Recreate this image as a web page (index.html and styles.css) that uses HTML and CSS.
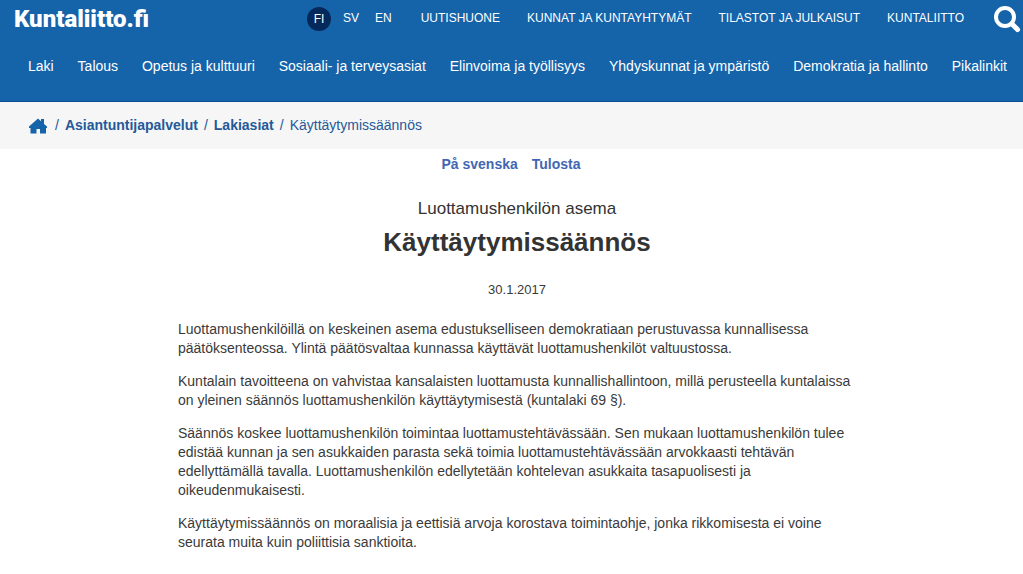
FILE: index.html
```html
<!DOCTYPE html>
<html lang="fi">
<head>
<meta charset="utf-8">
<meta name="viewport" content="width=device-width, initial-scale=1">
<title>Käyttäytymissäännös | Kuntaliitto.fi</title>
<link rel="stylesheet" href="styles.css">
</head>
<body>
<header class="header">
  <div class="topbar">
    <a class="logo" href="#">Kuntaliitto.fi</a>
    <nav class="languages" aria-label="Kieli">
      <a class="language language-active" href="#">FI</a>
      <a class="language" href="#">SV</a>
      <a class="language" href="#">EN</a>
    </nav>
    <nav class="services" aria-label="Palvelut">
      <a href="#">UUTISHUONE</a>
      <a href="#">KUNNAT JA KUNTAYHTYMÄT</a>
      <a href="#">TILASTOT JA JULKAISUT</a>
      <a href="#">KUNTALIITTO</a>
    </nav>
    <button class="search" type="button" aria-label="Haku">
      <svg viewBox="0 0 28 28" width="28" height="28" aria-hidden="true"><circle cx="12" cy="12" r="9" fill="none" stroke="#fff" stroke-width="4"/><path d="M19 19l5.500 5.500" stroke="#fff" stroke-width="5" stroke-linecap="round"/></svg>
    </button>
  </div>
  <nav class="mainnav" aria-label="Päävalikko">
    <a href="#">Laki</a>
    <a href="#">Talous</a>
    <a href="#">Opetus ja kulttuuri</a>
    <a href="#">Sosiaali- ja terveysasiat</a>
    <a href="#">Elinvoima ja työllisyys</a>
    <a href="#">Yhdyskunnat ja ympäristö</a>
    <a href="#">Demokratia ja hallinto</a>
    <a href="#">Pikalinkit</a>
  </nav>
</header>
<nav class="breadcrumb" aria-label="Murupolku">
  <a class="home" href="#" aria-label="Etusivu"><svg viewBox="0 0 18 16" width="18" height="16" aria-hidden="true"><path d="M9 .5l3 2.700V1h3v5L18 8.500V10h-1v5.500h-6V11H7.500v4.500H1.500V10H0V8.500z" fill="#1563a9"/></svg></a>
  <span>/</span>
  <a class="crumb" href="#">Asiantuntijapalvelut</a>
  <span>/</span>
  <a class="crumb" href="#">Lakiasiat</a>
  <span>/</span>
  <span>Käyttäytymissäännös</span>
</nav>
<main class="article">
  <div class="actions">
    <a href="#">På svenska</a>
    <a href="#">Tulosta</a>
  </div>
  <p class="topic">Luottamushenkilön asema</p>
  <h1 class="title">Käyttäytymissäännös</h1>
  <time class="date" datetime="2017-01-30">30.1.2017</time>
  <div class="body">
    <p>Luottamushenkilöillä on keskeinen asema edustukselliseen demokratiaan perustuvassa kunnallisessa päätöksenteossa. Ylintä päätösvaltaa kunnassa käyttävät luottamushenkilöt valtuustossa.</p>
    <p>Kuntalain tavoitteena on vahvistaa kansalaisten luottamusta kunnallishallintoon, millä perusteella kuntalaissa on yleinen säännös luottamushenkilön käyttäytymisestä (kuntalaki 69 §).</p>
    <p>Säännös koskee luottamushenkilön toimintaa luottamustehtävässään. Sen mukaan luottamushenkilön tulee edistää kunnan ja sen asukkaiden parasta sekä toimia luottamustehtävässään arvokkaasti tehtävän edellyttämällä tavalla. Luottamushenkilön edellytetään kohtelevan asukkaita tasapuolisesti ja oikeudenmukaisesti.</p>
    <p>Käyttäytymissäännös on moraalisia ja eettisiä arvoja korostava toimintaohje, jonka rikkomisesta ei voine seurata muita kuin poliittisia sanktioita.</p>
  </div>
</main>
</body>
</html>
```
FILE: styles.css
```css
* {
  box-sizing: border-box;
}

body {
  margin: 0;
  background: #fff;
  color: #3a3a3a;
  font: 14px/19px "Liberation Sans", Arial, sans-serif;
}

a {
  color: inherit;
  text-decoration: none;
  white-space: nowrap;
}

.header {
  background: #1563a9;
  border-bottom: 1px solid #0a4f96;
  color: #fff;
  padding-bottom: 25px;
}

.topbar {
  display: flex;
  align-items: center;
  height: 37px;
  padding-left: 14px;
  padding-right: 2px;
}

.logo {
  font: 900 24px/30px Roboto, sans-serif;
}

.languages {
  display: flex;
  align-items: center;
  gap: 16px;
  margin-left: auto;
  margin-right: 29px;
  font-size: 12px;
}

.language-active {
  width: 24px;
  margin-right: -4px;
  border-radius: 50%;
  background: #06295c;
  line-height: 24px;
  text-align: center;
}

.services {
  display: flex;
  gap: 27px;
  margin-right: 29px;
  font-size: 12px;
}

.search {
  display: flex;
  padding: 0;
  border: 0;
  background: none;
  cursor: pointer;
}

.mainnav {
  display: flex;
  justify-content: space-between;
  padding: 20px 16px 0 28px;
}

.breadcrumb {
  display: flex;
  align-items: center;
  gap: 6px;
  height: 47px;
  padding-left: 29px;
  background: #f6f6f6;
  color: #24599a;
}

.home {
  display: flex;
  margin-right: 2px;
}

.crumb {
  font-weight: bold;
}

.article {
  display: flex;
  flex-direction: column;
  align-items: center;
  padding: 6px 0 20px 11px;
}

.actions {
  display: flex;
  gap: 14px;
  margin-right: 12px;
  color: #4267b2;
  font-weight: bold;
}

.topic {
  margin: 23px 0 0;
  color: #333;
  font-size: 17px;
  line-height: 24px;
}

.title {
  margin: 6px 0 0;
  color: #333;
  font-size: 26px;
  line-height: 30px;
}

.date {
  margin-top: 23px;
  font-size: 13px;
}

.body {
  width: 100%;
  max-width: 678px;
  margin-top: 21px;
}

.body p {
  margin: 0 0 14px;
}
```
